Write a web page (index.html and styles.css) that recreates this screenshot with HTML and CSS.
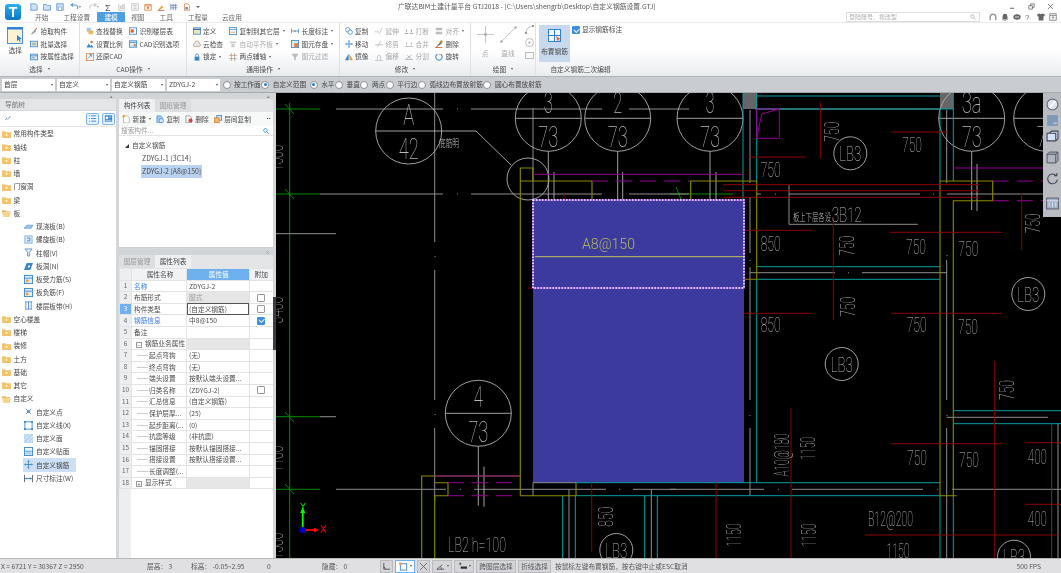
FILE: index.html
```html
<!DOCTYPE html>
<html lang="zh">
<head>
<meta charset="utf-8">
<title>GTJ2018</title>
<link rel="stylesheet" href="styles.css">
</head>
<body>
<svg class="defs" width="0" height="0">
  <symbol id="folder" viewBox="0 0 10 9"><path d="M0 1.5h3.5l1 1H10V9H0z" fill="#f2c36b"/><circle cx="5" cy="5.5" r="1.2" fill="#fff3d0"/></symbol>
  <symbol id="folderopen" viewBox="0 0 10 9"><path d="M0 1.5h3.5l1 1H9V4H0z" fill="#e9b65c"/><path d="M0 4h10L8.5 9H1.5z" fill="#f6d48c"/></symbol>
  <symbol id="grid" viewBox="0 0 10 10"><rect x=".5" y=".5" width="9" height="9" fill="#e2effb" stroke="#3a86cc"/><path d="M.5 3.5h9" stroke="#3a86cc"/><rect x="2" y="5" width="3" height="3" fill="#f0a040"/></symbol>
</svg>

<header class="top">
  <div class="logo"><span class="logo-t">T</span></div>
  <div class="top-main">
    <div class="qat">
      <svg class="q" viewBox="0 0 10 10"><path d="M1 1h6l2 2v6H1z" fill="#cfe2f6" stroke="#5a94cc"/></svg>
      <svg class="q" viewBox="0 0 10 10"><path d="M.5 2h4l1 1h4v6H.5z" fill="#cfe2f6" stroke="#5a94cc"/></svg>
      <svg class="q" viewBox="0 0 10 10"><rect x="1" y="1" width="8" height="8" fill="#cfe2f6" stroke="#5a94cc"/><rect x="3" y="5" width="4" height="4" fill="#fff" stroke="#5a94cc" stroke-width=".6"/></svg>
      <svg class="q q-wide" viewBox="0 0 14 10"><path d="M9 7.5A3 3 0 0 0 7 2.5H2M4 .5l-2.5 2 2.5 2" fill="none" stroke="#5a94cc" stroke-width="1.3"/><path d="M11 4h3l-1.5 2z" fill="#666"/></svg>
      <svg class="q q-wide" viewBox="0 0 14 10"><path d="M3 7.5A3 3 0 0 1 5 2.5h5M8 .5l2.5 2L8 4.500" fill="none" stroke="#c4c8cc" stroke-width="1.3"/><path d="M11 4h3l-1.5 2z" fill="#999"/></svg>
      <span class="q sigma">Σ</span>
      <svg class="q" viewBox="0 0 10 10"><path d="M1 9V1M1 9h8M3 7V4h2v3zM6 7V2h2v5z" fill="none" stroke="#bbb"/></svg>
      <svg class="q" viewBox="0 0 10 10"><rect x="1" y="1" width="8" height="8" fill="none" stroke="#bbb"/><path d="M3 3h4M3 5h4M3 7h4" stroke="#bbb"/></svg>
      <svg class="q" viewBox="0 0 10 10"><rect x="1" y="2" width="8" height="7" fill="#fff" stroke="#e08040"/><path d="M1 3.5h8" stroke="#e08040"/><circle cx="5" cy="6" r="1.5" fill="#e08040"/></svg>
      <svg class="q" viewBox="0 0 10 10"><path d="M1 9l5-6 2 2-5 4z" fill="#f0a040"/><path d="M1 9.500h8" stroke="#d04040"/></svg>
      <svg class="q" viewBox="0 0 10 10"><path d="M1 1v8M4 1v8M7 1v8M1 3h8M1 6h8" stroke="#5a7ab0" stroke-width=".9"/></svg>
      <svg class="q" viewBox="0 0 10 10"><path d="M2 1h4l2 2v6H2z" fill="#fff" stroke="#e08040"/><rect x="3" y="5" width="3" height="3" fill="#4a8fd0"/></svg>
      <span class="qdrop"></span>
      <span class="apptitle">广联达BIM土建计量平台 GTJ2018 - [C:\Users\shengrb\Desktop\自定义钢筋设置.GTJ]</span>
      <span class="winctl">
        <svg class="w" viewBox="0 0 8 8"><path d="M1 6h5" stroke="#555"/></svg>
        <svg class="w" viewBox="0 0 8 8"><path d="M1 3h4v4H1zM3 3V1h4v4H5" fill="none" stroke="#555" stroke-width=".8"/></svg>
        <svg class="w" viewBox="0 0 8 8"><path d="M1 1l6 6M7 1L1 7" stroke="#555" stroke-width=".8"/></svg>
      </span>
    </div>
    <div class="tabline">
      <nav class="tabs">
        <span class="tab t1">开始</span>
        <span class="tab t2">工程设置</span>
        <span class="tab active">建模</span>
        <span class="tab t3">视图</span>
        <span class="tab t4">工具</span>
        <span class="tab t5">工程量</span>
        <span class="tab t6">云应用</span>
      </nav>
      <div class="tray">
        <div class="search"><span>登陆账号、搜改型</span>
          <svg class="s-ic" viewBox="0 0 8 8"><circle cx="3.2" cy="3.2" r="2.4" fill="none" stroke="#aaa"/><path d="M5 5l2.5 2.5" stroke="#aaa"/></svg>
        </div>
        <svg class="ti ti-first" viewBox="0 0 10 10"><path d="M1.500 9V5a3.500 3.500 0 0 1 7 0v4" fill="none" stroke="#999" stroke-width="1.8"/></svg>
        <svg class="ti" viewBox="0 0 10 10"><path d="M5 1a3 3 0 0 1 3 3v3l1 1H1l1-1V4a3 3 0 0 1 3-3zM4 9h2v1H4z" fill="#666"/></svg>
        <svg class="ti" viewBox="0 0 10 10"><ellipse cx="5" cy="5" rx="4.5" ry="3.5" fill="#666"/><path d="M2.500 5h5" stroke="#fff"/></svg>
        <span class="ti help">?<i>⁃</i></span>
        <svg class="ti" viewBox="0 0 10 10"><path d="M0 2l3-1.500 2 1 2-1L10 2 9 4.500H8V9.500H2V4.500H1z" fill="#666"/></svg>
        <svg class="ti" viewBox="0 0 10 10"><rect x="1" y="1" width="8" height="8" fill="none" stroke="#777"/><path d="M1 3h8M5 8V4.500M3.500 6L5 4.500 6.500 6" fill="none" stroke="#777"/></svg>
      </div>
    </div>
  </div>
</header>

<section class="ribbon">
  <div class="group g1">
    <div class="gbody">
      <div class="bigbtn">
        <svg class="bigic" viewBox="0 0 16 17"><rect x=".5" y=".5" width="15" height="16" fill="#fbf1d5" stroke="#4a93d8"/><rect x="0" y="0" width="16" height="2.500" fill="#2f82cf"/><path d="M10 8l5 4-2.200.300 1 2.400-1 .3-1-2.300L10 14z" fill="#2f82cf"/></svg>
        <span>选择</span>
      </div>
      <div class="col">
        <div class="cmd"><svg class="ic" viewBox="0 0 10 10"><path d="M1 9l5-6 2 2-5 4z" fill="#999"/><path d="M6 3l2-2 1 1-2 2" fill="#d86a3a"/></svg>拾取构件</div>
        <div class="cmd"><svg class="ic" viewBox="0 0 10 10"><rect x=".5" y="1.500" width="9" height="7" fill="#fbeec8" stroke="#3a86cc"/><path d="M2 4h6M2 6h6" stroke="#3a86cc" stroke-width=".8"/></svg>批量选择</div>
        <div class="cmd"><svg class="ic" viewBox="0 0 10 10"><rect x=".5" y="1.500" width="9" height="7" fill="#dcebfa" stroke="#3a86cc"/><path d="M.5 3.500h9" stroke="#3a86cc"/><path d="M2 6h4" stroke="#777"/></svg>按属性选择</div>
      </div>
    </div>
    <div class="glabel">选择 <i class="dd"></i></div>
  </div>

  <div class="group g2">
    <div class="gbody">
      <div class="col c-a">
        <div class="cmd"><svg class="ic" viewBox="0 0 10 10"><path d="M1 1h5v5H1z" fill="#9cc6ec"/><path d="M3 4h6v5H3z" fill="#f2b860"/></svg>查找替换</div>
        <div class="cmd"><svg class="ic" viewBox="0 0 10 10"><path d="M.5 9.500l3-5 2 3 1.500-1.500 2.500 3.500z" fill="#3a86cc"/><circle cx="7" cy="2.500" r="1.500" fill="#e86a3a"/></svg>设置比例</div>
        <div class="cmd"><svg class="ic" viewBox="0 0 10 10"><rect x=".5" y=".5" width="9" height="9" fill="#fff" stroke="#e08040"/><path d="M2 7l5-5M7 5V2H4" fill="none" stroke="#3a86cc"/></svg>还原CAD</div>
      </div>
      <div class="col c-b">
        <div class="cmd"><svg class="ic" viewBox="0 0 10 10"><rect x=".5" y="1" width="9" height="8" fill="#fff" stroke="#3a86cc"/><rect x="2" y="3" width="4" height="4" fill="#e0602a"/></svg>识别楼层表</div>
        <div class="cmd"><svg class="ic" viewBox="0 0 10 10"><rect x=".5" y="1" width="9" height="8" fill="#dcebfa" stroke="#3a86cc"/><path d="M.5 3h9" stroke="#3a86cc"/><rect x="6" y="5" width="2.500" height="3" fill="#e08040"/></svg>CAD识别选项</div>
      </div>
    </div>
    <div class="glabel">CAD操作 <i class="dd"></i></div>
  </div>

  <div class="group g3">
    <div class="gbody">
      <div class="col c-a">
        <div class="cmd"><svg class="ic" viewBox="0 0 10 10"><rect x=".5" y="1" width="9" height="8" fill="#f3e3b8" stroke="#3a86cc"/><path d="M.5 3h9" stroke="#2f72b8" stroke-width="1.500"/></svg>定义</div>
        <div class="cmd"><svg class="ic" viewBox="0 0 10 10"><path d="M2.500 8a2 2 0 0 1-.5-4 3 3 0 0 1 6 .5 1.800 1.800 0 0 1 0 3.500z" fill="#dcebfa" stroke="#e08040" stroke-width=".8"/></svg>云检查</div>
        <div class="cmd"><svg class="ic" viewBox="0 0 10 10"><rect x="2" y="4.500" width="6" height="5" fill="#3a86cc"/><path d="M3.200 4.500V3a1.800 1.800 0 0 1 3.600 0v1.500" fill="none" stroke="#3a86cc"/></svg>锁定<i class="dd"></i></div>
      </div>
      <div class="col c-b">
        <div class="cmd"><svg class="ic" viewBox="0 0 10 10"><rect x=".5" y=".5" width="9" height="9" fill="#fff" stroke="#3a86cc"/><path d="M.5 3h9" stroke="#3a86cc"/><path d="M2 6.500h6" stroke="#e08040"/></svg>复制到其它层<i class="dd"></i></div>
        <div class="cmd off"><svg class="ic" viewBox="0 0 10 10"><path d="M1 2h8v2H1zM3 5h4v4H3z" fill="#ccc"/></svg>自动平齐板<i class="dd"></i></div>
        <div class="cmd"><svg class="ic" viewBox="0 0 10 10"><path d="M3 0v10M7 0v10M0 3h10M0 7h10" stroke="#a08060" stroke-width=".7"/></svg>两点辅轴<i class="dd"></i></div>
      </div>
      <div class="col c-c">
        <div class="cmd"><svg class="ic" viewBox="0 0 10 10"><path d="M.5 2v6M9.500 2v6M.5 5h9" stroke="#3a86cc"/><path d="M4 4h2v2H4z" fill="#e08040"/></svg>长度标注<i class="dd"></i></div>
        <div class="cmd"><svg class="ic" viewBox="0 0 10 10"><rect x=".5" y=".5" width="9" height="9" fill="#dcebfa" stroke="#3a86cc"/><rect x="4" y="4" width="5" height="5" fill="#e08040"/></svg>图元存盘<i class="dd"></i></div>
        <div class="cmd off"><svg class="ic" viewBox="0 0 10 10"><path d="M.5 1h9L6 5.500V9.500L4 8.500v-3z" fill="#bbb"/></svg>图元过滤</div>
      </div>
    </div>
    <div class="glabel">通用操作 <i class="dd"></i></div>
  </div>

  <div class="group g4">
    <div class="gbody">
      <div class="col c-a">
        <div class="cmd"><svg class="ic" viewBox="0 0 10 10"><circle cx="3.500" cy="3.500" r="2.800" fill="none" stroke="#3a86cc"/><circle cx="6.500" cy="6.500" r="2.800" fill="#fff" stroke="#3a86cc"/></svg>复制</div>
        <div class="cmd"><svg class="ic" viewBox="0 0 10 10"><path d="M5 0l1.500 2h-3zM5 10L3.500 8h3zM0 5l2-1.500v3zM10 5L8 3.500v3z" fill="#2f82cf"/><path d="M2 5h6M5 2v6" stroke="#2f82cf"/></svg>移动</div>
        <div class="cmd"><svg class="ic" viewBox="0 0 10 10"><path d="M4.500 1v8H0z" fill="#2f82cf"/><path d="M5.500 1v8H10z" fill="#f0a030"/></svg>镜像</div>
      </div>
      <div class="col c-b off">
        <div class="cmd"><svg class="ic" viewBox="0 0 10 10"><path d="M0 6h5M9 1L5 9" stroke="#bbb"/></svg>延伸</div>
        <div class="cmd"><svg class="ic" viewBox="0 0 10 10"><path d="M0 6h10M7 1L3 9" stroke="#bbb"/></svg>修剪</div>
        <div class="cmd"><svg class="ic" viewBox="0 0 10 10"><path d="M3 9V5a2 2 0 0 1 4 0v4M0 9.500h10" fill="none" stroke="#bbb"/></svg>偏移</div>
      </div>
      <div class="col c-c off">
        <div class="cmd"><svg class="ic" viewBox="0 0 10 10"><path d="M0 8h4M6 8h4M2 3v3M8 3v3" stroke="#888"/></svg>打断</div>
        <div class="cmd"><svg class="ic" viewBox="0 0 10 10"><path d="M0 8h10M2 3v3M8 3v3" stroke="#aaa"/></svg>合并</div>
        <div class="cmd"><svg class="ic" viewBox="0 0 10 10"><path d="M0 8h10M2 7l6-4M3 3l4 4" stroke="#aaa"/></svg>分割</div>
      </div>
      <div class="col c-d">
        <div class="cmd off"><svg class="ic" viewBox="0 0 10 10"><path d="M1 1h8v3H1zM1 6h8v3H1z" fill="#bbb"/></svg>对齐<i class="dd"></i></div>
        <div class="cmd"><svg class="ic" viewBox="0 0 10 10"><path d="M1 9l6-7 2 2-7 5z" fill="#777"/><path d="M0 9.500h9" stroke="#e0602a" stroke-width="1.200"/><path d="M6 2l2-2 2 2-2 2" fill="#e08030"/></svg>删除</div>
        <div class="cmd"><svg class="ic" viewBox="0 0 10 10"><path d="M7 1.500A4 4 0 1 1 3 1.500" fill="none" stroke="#3a86cc" stroke-width="1.300"/><path d="M5 .5l2.500 1-2 1.500z" fill="#f0a030"/></svg>旋转</div>
      </div>
    </div>
    <div class="glabel">修改 <i class="dd"></i></div>
  </div>

  <div class="group g5">
    <div class="gbody">
      <div class="bigoff b-pt">
        <svg class="drawic" viewBox="0 0 18 18"><path d="M0 9h18M9 0v18" stroke="#c4c4c4"/><circle cx="9" cy="9" r="1.500" fill="#aaa"/></svg>
        <span>点</span>
      </div>
      <div class="bigoff b-ln">
        <svg class="drawic" viewBox="0 0 18 18"><path d="M1 17L17 1" stroke="#c4c4c4"/><circle cx="1.500" cy="16.500" r="1.300" fill="#aaa"/><circle cx="16.500" cy="1.500" r="1.300" fill="#aaa"/></svg>
        <span>直线</span>
      </div>
      <div class="col c-draw">
        <svg class="dic" viewBox="0 0 9 9"><path d="M1 8A7 7 0 0 1 8 1" fill="none" stroke="#bbb"/><rect y="7" width="2" height="2" fill="#999"/><rect x="7" width="2" height="2" fill="#999"/></svg>
        <svg class="dic" viewBox="0 0 9 9"><circle cx="4.500" cy="4.500" r="4" fill="none" stroke="#bbb"/><circle cx="4.500" cy="4.500" r="1" fill="#999"/></svg>
        <svg class="dic" viewBox="0 0 9 9"><rect x=".5" y="1.500" width="8" height="6" fill="none" stroke="#bbb"/></svg>
      </div>
    </div>
    <div class="glabel">绘图 <i class="dd"></i></div>
  </div>

  <div class="group g6">
    <div class="gbody">
      <div class="bigsel">
        <svg class="selic" viewBox="0 0 14 14"><rect x=".5" y=".5" width="12" height="12" fill="#f4f8fc" stroke="#2f82cf"/><path d="M.5 6.500h12M6.500.5v12" stroke="#2f82cf"/><path d="M8 7l5 3-2 .5 1 2.500-2-2-1 1z" fill="#e8753a"/></svg>
        <span>布置钢筋</span>
      </div>
      <label class="rchk"><span class="cb on"></span>显示钢筋标注</label>
    </div>
    <div class="glabel">自定义钢筋二次编辑</div>
  </div>
</section>

<section class="opts">
  <div class="sel">首层<i class="dd"></i></div>
  <div class="sel">自定义<i class="dd"></i></div>
  <div class="sel">自定义钢筋<i class="dd"></i></div>
  <div class="sel">ZDYGJ-2<i class="dd"></i></div>
  <div class="radios">
    <span class="rad"><i class="dot"></i>按工作面</span>
    <span class="rad"><i class="dot on"></i>自定义范围</span>
    <span class="rad r-gap"><i class="dot on"></i>水平</span>
    <span class="rad"><i class="dot"></i>垂直</span>
    <span class="rad"><i class="dot"></i>两点</span>
    <span class="rad"><i class="dot"></i>平行边</span>
    <span class="rad"><i class="dot"></i>弧线边布置放射筋</span>
    <span class="rad"><i class="dot"></i>圆心布置放射筋</span>
  </div>
</section>

<main class="main">
  <aside class="nav">
    <div class="paneltop"><i class="pin">▴</i></div>
    <div class="phead">导航树</div>
    <div class="navtools">
      <svg class="navstar" viewBox="0 0 10 8"><path d="M1 6l2-2 2 1 3-4" stroke="#2f72c8" stroke-width="1.200" fill="none" stroke-dasharray="1.500 .8"/></svg>
      <span class="navbtn"><svg viewBox="0 0 10 10"><path d="M1 2h1M1 5h1M1 8h1M3.500 2H9M3.500 5H9M3.500 8H9" stroke="#3a86cc"/></svg></span>
      <span class="navbtn"><svg viewBox="0 0 10 10"><rect x="1" y="1.500" width="8" height="7" fill="#3a86cc"/><rect x="2" y="3" width="2.500" height="2.500" fill="#fff"/><path d="M5.500 3.500H8M2 7h6" stroke="#fff" stroke-width=".7"/></svg></span>
    </div>
    <ul class="tree">
      <li><svg class="fold"><use href="#folder"/></svg>常用构件类型</li>
      <li><svg class="fold"><use href="#folder"/></svg>轴线</li>
      <li><svg class="fold"><use href="#folder"/></svg>柱</li>
      <li><svg class="fold"><use href="#folder"/></svg>墙</li>
      <li><svg class="fold"><use href="#folder"/></svg>门窗洞</li>
      <li><svg class="fold"><use href="#folder"/></svg>梁</li>
      <li><svg class="fold"><use href="#folderopen"/></svg>板</li>
      <li class="sub"><svg class="leaf" viewBox="0 0 10 10"><path d="M0 7l3-3.500h7L8 7z" fill="#9cc6ec" stroke="#3a86cc" stroke-width=".6"/></svg>现浇板(B)</li>
      <li class="sub"><svg class="leaf" viewBox="0 0 10 10"><rect x="1" y="1" width="8" height="8" fill="#dcebfa" stroke="#7ab0e0"/><path d="M3.500 3.500h3v3h-3" fill="none" stroke="#3a86cc"/></svg>螺旋板(B)</li>
      <li class="sub"><svg class="leaf" viewBox="0 0 10 10"><path d="M1 1h8L6 5v4H4V5z" fill="#dcebfa" stroke="#3a86cc" stroke-width=".8"/></svg>柱帽(V)</li>
      <li class="sub"><svg class="leaf" viewBox="0 0 10 10"><path d="M0 9l3-8h7L7 9z" fill="#3a86cc"/><path d="M4 6l1-2h2L6 6z" fill="#fff"/></svg>板洞(N)</li>
      <li class="sub"><svg class="leaf" viewBox="0 0 10 10"><use href="#grid"/></svg>板受力筋(S)</li>
      <li class="sub"><svg class="leaf" viewBox="0 0 10 10"><use href="#grid"/></svg>板负筋(F)</li>
      <li class="sub"><svg class="leaf" viewBox="0 0 10 10"><path d="M2 1v8M5 1v8M8 1v8M1 1h8M1 9h8" stroke="#3a86cc" stroke-width=".9"/></svg>楼层板带(H)</li>
      <li><svg class="fold"><use href="#folder"/></svg>空心楼盖</li>
      <li><svg class="fold"><use href="#folder"/></svg>楼梯</li>
      <li><svg class="fold"><use href="#folder"/></svg>装修</li>
      <li><svg class="fold"><use href="#folder"/></svg>土方</li>
      <li><svg class="fold"><use href="#folder"/></svg>基础</li>
      <li><svg class="fold"><use href="#folder"/></svg>其它</li>
      <li><svg class="fold"><use href="#folderopen"/></svg>自定义</li>
      <li class="sub"><svg class="leaf" viewBox="0 0 10 10"><path d="M2 2l6 6M8 2L2 8" stroke="#5a9ada"/><circle cx="5" cy="5" r="1.500" fill="#3a86cc"/></svg>自定义点</li>
      <li class="sub"><svg class="leaf" viewBox="0 0 10 10"><rect x="1" y="1" width="8" height="8" fill="none" stroke="#3a86cc"/><rect width="2" height="2" fill="#3a86cc"/><rect x="8" width="2" height="2" fill="#3a86cc"/><rect y="8" width="2" height="2" fill="#3a86cc"/><rect x="8" y="8" width="2" height="2" fill="#3a86cc"/></svg>自定义线(X)</li>
      <li class="sub"><svg class="leaf" viewBox="0 0 10 10"><rect width="10" height="10" fill="#b8d4f0"/><path d="M0 3l3-3M0 7l7-7M2 10l8-8M6 10l4-4" stroke="#fff" stroke-width=".7"/></svg>自定义面</li>
      <li class="sub"><svg class="leaf" viewBox="0 0 10 10"><rect x=".5" y=".5" width="9" height="9" fill="#f4f8fc" stroke="#3a86cc"/><rect x="1.500" y="4" width="7" height="2" fill="#7ab0e0"/><path d="M1.500 7.500h7" stroke="#7ab0e0"/></svg>自定义贴面</li>
      <li class="sub cur"><svg class="leaf" viewBox="0 0 10 10"><path d="M5 0l1.500 2h-3zM5 10L3.500 8h3zM0 5l2-1.500v3zM10 5L8 3.500v3z" fill="#3a86cc"/><path d="M5 2v6M2 5h6" stroke="#3a86cc"/></svg>自定义钢筋</li>
      <li class="sub"><svg class="leaf" viewBox="0 0 10 10"><path d="M.5 1v8M9.500 1v8" stroke="#555"/><path d="M1 5h8" stroke="#3a86cc"/><path d="M1 5l2-1.500v3zM9 5L7 3.500v3z" fill="#3a86cc"/></svg>尺寸标注(W)</li>
    </ul>
  </aside>

  <section class="mid">
    <div class="parts">
      <div class="paneltop"><i class="pin">▴</i></div>
      <div class="ptabs"><span class="ptab on">构件列表</span><span class="ptab">图纸管理</span></div>
      <div class="ptools">
        <span class="pt"><svg class="ic" viewBox="0 0 10 10"><path d="M2 1h5l2 2v7H2z" fill="#fff" stroke="#999" stroke-width=".8"/><circle cx="2" cy="1.500" r="1.500" fill="#f0a030"/></svg>新建<i class="dd"></i></span>
        <span class="pt"><svg class="ic" viewBox="0 0 10 10"><path d="M1 1h5l2 2v6.500H1z" fill="#9cc6ec" stroke="#3a86cc" stroke-width=".7"/><rect x="4" y="5" width="5" height="4" fill="#dcebfa" stroke="#3a86cc" stroke-width=".7"/></svg>复制</span>
        <span class="pt"><svg class="ic" viewBox="0 0 10 10"><path d="M1 1h5l2 2v6.500H1z" fill="#eee" stroke="#777" stroke-width=".7"/><circle cx="7" cy="7" r="2.500" fill="#d84040"/></svg>删除</span>
        <span class="pt"><svg class="ic" viewBox="0 0 10 10"><rect x="3.500" y=".5" width="6" height="6" fill="#dcebfa" stroke="#3a86cc"/><rect x=".5" y="3.500" width="6" height="6" fill="#f2b860" stroke="#e08030"/></svg>层间复制</span>
        <span class="pmore">⠒</span>
      </div>
      <div class="psearch"><span>搜索构件...</span><svg class="s-ic" viewBox="0 0 8 8"><circle cx="3.200" cy="3.200" r="2.400" fill="none" stroke="#2f82cf"/><path d="M5 5l2.500 2.500" stroke="#2f82cf" stroke-width="1.300"/></svg></div>
      <div class="plist">
        <div class="pnode"><i class="tri"></i>自定义钢筋</div>
        <div class="pitem">ZDYGJ-1 [3C14]</div>
        <div class="pitem chosen">ZDYGJ-2 [A8@150]</div>
      </div>
    </div>
    <div class="props">
      <div class="paneltop"><i class="pin x">×</i></div>
      <div class="ptabs"><span class="ptab">图层管理</span><span class="ptab on">属性列表</span></div>
      <table class="ptable">
        <thead><tr><th class="n"></th><th class="nm">属性名称</th><th class="val">属性值</th><th class="add">附加</th></tr></thead>
        <tbody>
          <tr><td class="n">1</td><td class="blue">名称</td><td>ZDYGJ-2</td><td class="add"></td></tr>
          <tr><td class="n">2</td><td>布筋形式</td><td class="graycell">图式</td><td class="add"><span class="cb"></span></td></tr>
          <tr><td class="n cur">3</td><td>构件类型</td><td class="focus">(自定义钢筋)</td><td class="add"><span class="cb"></span></td></tr>
          <tr><td class="n">4</td><td class="blue">钢筋信息</td><td>中8@150</td><td class="add"><span class="cb on"></span></td></tr>
          <tr><td class="n">5</td><td>备注</td><td></td><td class="add"></td></tr>
          <tr><td class="n">6</td><td><span class="ex">−</span>钢筋业务属性</td><td class="graycell"></td><td class="add"></td></tr>
          <tr><td class="n">7</td><td class="ind">起点弯钩</td><td>(无)</td><td class="add"></td></tr>
          <tr><td class="n">8</td><td class="ind">终点弯钩</td><td>(无)</td><td class="add"></td></tr>
          <tr><td class="n">9</td><td class="ind">端头设置</td><td>按默认端头设置...</td><td class="add"></td></tr>
          <tr><td class="n">10</td><td class="ind">归类名称</td><td>(ZDYGJ-2)</td><td class="add"><span class="cb"></span></td></tr>
          <tr><td class="n">11</td><td class="ind">汇总信息</td><td>(自定义钢筋)</td><td class="add"></td></tr>
          <tr><td class="n">12</td><td class="ind">保护层厚...</td><td>(25)</td><td class="add"></td></tr>
          <tr><td class="n">13</td><td class="ind">起步距离(...</td><td>(0)</td><td class="add"></td></tr>
          <tr><td class="n">14</td><td class="ind">抗震等级</td><td>(非抗震)</td><td class="add"></td></tr>
          <tr><td class="n">15</td><td class="ind">锚固搭接</td><td>按默认锚固搭接...</td><td class="add"></td></tr>
          <tr><td class="n">16</td><td class="ind">搭接设置</td><td>按默认搭接设置...</td><td class="add"></td></tr>
          <tr><td class="n">17</td><td class="ind">长度调整(...</td><td></td><td class="add"></td></tr>
          <tr><td class="n">18</td><td><span class="ex">+</span>显示样式</td><td class="graycell"></td><td class="add"></td></tr>
        </tbody>
      </table>
      <div class="pfill"></div>
    </div>
  </section>

  <div class="split"><i></i></div>

  <section class="canvas">
    <svg class="cad" viewBox="276 93 785 465" width="785" height="465">
      <rect x="533" y="200" width="211" height="282.7" fill="#3d3a9e"/>
      <g class="gr">
        <path d="M289.7 103V558M276 109H320M276 194H320M276 416.7H320M276 489.3H320M670 194H733"/>
        <path d="M285 104l9 10M285 189l9 10M285 412l9 10M285 484l9 10M676 187l5 12"/>
      </g>
      <g class="gy">
        <path d="M336 109H443M471 109H602M629 109H689M336 194H443M471 194H602M629 194H689M276 233.7H336M320 194H336M320 416.7H336"/>
        <path d="M434.7 93V242M434.7 270V400M434.7 428V500M533 108V200"/>
        <path d="M757 194H761M789 194H920M947 194H1061M750 272.7H835M862 272.7H947"/>
        <path d="M750 110V183M750 197V253M750 267V400M750 428V496M946.7 110V183M946.7 260V400M946.7 428V558"/>
        <path d="M336 489.3H446M474 489.3H606M633 489.3H676M670 489.3H764M792 489.3H923M952 489.3H1061M946.7 417.3H1048"/>
        <path d="M533 482.7H576M533 482.7V496M569 489.3V558M651.3 489.3V558M1058 423.700V558"/>
        <path d="M755 109H940"/>
        <path d="M789 185.3V224.3H917.7"/>
      </g>
      <g class="gdot">
        <path d="M457 109h1M457 194h1M435 256v1M435 414v1M460 489.3h1M619 489.3h1M778 489.3h1M937 489.3h1M775 194h1M933 194h1M848 272.7h1M750 260v1M947 255v1M947 415v1M750 415v1"/>
      </g>
      <path d="M743 93h14v16h-14zM940 93h13v16h-13z" fill="#666"/>
      <g class="ci">
        <circle cx="408.7" cy="131" r="33"/><circle cx="528" cy="179" r="21"/>
        <circle cx="548.3" cy="118.3" r="33"/><circle cx="617.7" cy="118.3" r="33"/>
        <circle cx="710" cy="118.3" r="33"/><circle cx="971.7" cy="118.3" r="33"/><circle cx="1046.7" cy="118.3" r="33"/>
        <circle cx="478.3" cy="413.3" r="33"/>
        <circle cx="850.3" cy="153.3" r="16.500"/><circle cx="1028.3" cy="294" r="16.500"/>
        <circle cx="841.7" cy="364" r="16.500"/><circle cx="616.3" cy="550" r="16.500"/><circle cx="1014" cy="556.7" r="16.500"/>
        <path d="M375.7 131H476L511 165M515.3 118.3H581.3M584.7 118.3H650.7M677 118.3H743M938.7 118.3H1004.7M1013.7 118.3H1061M445.3 413.3H511.3"/>
        <path d="M548.3 151.3V200M554 172V200M617.7 151.3V200M622.7 172V200M710 151.3V200M716 172V200M971.7 151.3V210M977 164V211M478.3 446.3V505.7M484 466.7V506.7"/>
      </g>
      <g class="cy">
        <path d="M756.7 96H940M756.7 109H953M743 93V200M756.7 93V181M756.7 279.3V482.7M940 109V181M953.3 93V181M756.7 266.7H940M756.7 279.3H940M953 410.7H1061M953 423.7H1061"/>
        <path d="M576 482.7H940M576 495.7H940M562.7 495.7V558M575.3 495.7V558M644.7 495.7V558M657.3 495.7V558M940 495.7V558M953.3 495.7V558"/>
      </g>
      <path class="cyd" d="M1051.7 423.7V558"/>
      <g class="ye">
        <path d="M520.3 495.7V168H533V181H592V200M520.3 181H533M520.3 495.7H576V482.7"/>
        <path d="M690.7 200V181H756.7V279.3H744"/>
        <path d="M953.3 495.7V200.7H992.7V181H940V495.7H956.7"/>
        <path d="M520.3 476H421.7V558M434.7 482.7H448V495.7H434.7V558"/>
      </g>
      <g class="pu">
        <path d="M533 174.3H743M953.3 168H1044M434.7 476H520.3"/>
        <path d="M756.7 109H779.3V138.3H756.7zM756.7 138.3L761.7 114L779.3 109"/>
      </g>
      <g class="pud">
        <path d="M592 181H690M992.7 181H1045M992.7 200.7H1045M448 482.7H520.3M448 495.7H520.3"/>
      </g>
      <g class="re">
        <path d="M564 194V200M528 288H533M820.3 101.7V158.3M891 132H946.7M750 157H805.7M723 184.7H979M723 190.7H979M723 197.3H979"/>
        <path d="M833.3 216.7V320M744 230.3H812M890 232.3H1001.7M1021.7 193V250M744 313.3H812M891 313.3H1002"/>
        <path d="M591.7 482.7V551.7M791 407.7V558M891 443.7H1002.3M994.3 360.7V558M1025.7 442.7H1061M1025.7 504.3H1061M865 535H1058M716 482.7V558"/>
      </g>
      <rect class="selbox2" x="533" y="200" width="211" height="88"/>
      <rect class="selbox" x="533" y="200" width="211" height="88"/>
      <path class="rebar" d="M535 256.7H743"/>
      <text class="rbt" x="582" y="249" textLength="53" lengthAdjust="spacingAndGlyphs">A8@150</text>
      <g class="tx">
        <text x="408.7" y="125" textLength="11" lengthAdjust="spacingAndGlyphs">A</text>
        <text x="408.7" y="159" textLength="20" lengthAdjust="spacingAndGlyphs">42</text>
        <text x="548.3" y="113" textLength="9" lengthAdjust="spacingAndGlyphs">3</text>
        <text x="548.3" y="146.7" textLength="20" lengthAdjust="spacingAndGlyphs">73</text>
        <text x="617.7" y="113" textLength="9" lengthAdjust="spacingAndGlyphs">2</text>
        <text x="617.7" y="146.7" textLength="20" lengthAdjust="spacingAndGlyphs">73</text>
        <text x="710" y="113" textLength="9" lengthAdjust="spacingAndGlyphs">3</text>
        <text x="710" y="146.7" textLength="20" lengthAdjust="spacingAndGlyphs">73</text>
        <text x="971.7" y="113" textLength="20" lengthAdjust="spacingAndGlyphs">3a</text>
        <text x="971.7" y="146.7" textLength="20" lengthAdjust="spacingAndGlyphs">73</text>
        <text x="1046.7" y="146.7" textLength="20" lengthAdjust="spacingAndGlyphs">73</text>
        <text x="478.3" y="407.3" textLength="9" lengthAdjust="spacingAndGlyphs">4</text>
        <text x="478.3" y="441.7" textLength="20" lengthAdjust="spacingAndGlyphs">73</text>
      </g>
      <g class="tm">
        <text x="912" y="151.5" textLength="20" lengthAdjust="spacingAndGlyphs">750</text>
        <text x="770.7" y="176.5" textLength="20" lengthAdjust="spacingAndGlyphs">750</text>
        <text x="770.7" y="250.5" textLength="20" lengthAdjust="spacingAndGlyphs">850</text>
        <text x="916" y="254" textLength="20" lengthAdjust="spacingAndGlyphs">750</text>
        <text x="968.3" y="256" textLength="20" lengthAdjust="spacingAndGlyphs">750</text>
        <text x="770.7" y="332" textLength="20" lengthAdjust="spacingAndGlyphs">850</text>
        <text x="916.7" y="332" textLength="20" lengthAdjust="spacingAndGlyphs">750</text>
        <text x="968" y="334" textLength="20" lengthAdjust="spacingAndGlyphs">750</text>
        <text x="917" y="465" textLength="20" lengthAdjust="spacingAndGlyphs">750</text>
        <text x="969" y="467" textLength="20" lengthAdjust="spacingAndGlyphs">750</text>
        <text x="1037.3" y="464" textLength="19" lengthAdjust="spacingAndGlyphs">400</text>
        <text x="1037.3" y="526" textLength="19" lengthAdjust="spacingAndGlyphs">400</text>
        <text x="898" y="558" textLength="23" lengthAdjust="spacingAndGlyphs">1150</text>
        <text x="890.5" y="526" textLength="45" lengthAdjust="spacingAndGlyphs">B12@200</text>
        <text x="477" y="552" textLength="58" lengthAdjust="spacingAndGlyphs">LB2 h=100</text>
        <text x="850.3" y="160.5" textLength="22" lengthAdjust="spacingAndGlyphs">LB3</text>
        <text x="1028.3" y="301.5" textLength="22" lengthAdjust="spacingAndGlyphs">LB3</text>
        <text x="841.7" y="371.5" textLength="22" lengthAdjust="spacingAndGlyphs">LB3</text>
        <text x="616.3" y="557.5" textLength="22" lengthAdjust="spacingAndGlyphs">LB3</text>
        <text x="1014" y="564" textLength="22" lengthAdjust="spacingAndGlyphs">LB3</text>
        <text x="846.7" y="222" textLength="30" lengthAdjust="spacingAndGlyphs">3B12</text>
        <text transform="rotate(-90 839.5 131.7)" x="839.5" y="131.7" textLength="20" lengthAdjust="spacingAndGlyphs">750</text>
        <text transform="rotate(-90 854.5 245.7)" x="854.5" y="245.7" textLength="20" lengthAdjust="spacingAndGlyphs">750</text>
        <text transform="rotate(-90 1040.5 223.3)" x="1040.5" y="223.3" textLength="20" lengthAdjust="spacingAndGlyphs">750</text>
        <text transform="rotate(-90 855.5 306.7)" x="855.5" y="306.7" textLength="20" lengthAdjust="spacingAndGlyphs">750</text>
        <text transform="rotate(-90 1013.5 390)" x="1013.5" y="390" textLength="20" lengthAdjust="spacingAndGlyphs">750</text>
        <text transform="rotate(-90 815.5 448.3)" x="815.5" y="448.3" textLength="23" lengthAdjust="spacingAndGlyphs">1150</text>
        <text transform="rotate(-90 740.5 535)" x="740.5" y="535" textLength="23" lengthAdjust="spacingAndGlyphs">1150</text>
        <text transform="rotate(-90 815.5 535)" x="815.5" y="535" textLength="23" lengthAdjust="spacingAndGlyphs">1150</text>
        <text transform="rotate(-90 789 455)" x="789" y="455" textLength="43" lengthAdjust="spacingAndGlyphs">A10@180</text>
        <text transform="rotate(-90 613 516.7)" x="613" y="516.7" textLength="20" lengthAdjust="spacingAndGlyphs">850</text>
        <text transform="rotate(-90 283 158)" x="283" y="158" textLength="27" lengthAdjust="spacingAndGlyphs">1500</text>
        <text transform="rotate(-90 283 310)" x="283" y="310" textLength="27" lengthAdjust="spacingAndGlyphs">3400</text>
        <text transform="rotate(-90 283 459)" x="283" y="459" textLength="27" lengthAdjust="spacingAndGlyphs">1100</text>
        <text transform="rotate(-90 283 546)" x="283" y="546" textLength="27" lengthAdjust="spacingAndGlyphs">1500</text>
      </g>
      <text class="cjk" x="439" y="147" textLength="20" lengthAdjust="spacingAndGlyphs">底筋明</text>
      <text class="cjk" x="793" y="221" textLength="38" lengthAdjust="spacingAndGlyphs">板上下层各设</text>
      <path d="M319 530l-5-2.500v5z" fill="#f00"/>
      <path d="M302.7 507l-2.500 6h5z" fill="#0f0"/>
      <path d="M302.7 530V512" stroke="#0f0" stroke-width="1.8"/>
      <path d="M302.7 530H315" stroke="#f00" stroke-width="1.8"/>
      <circle cx="302.7" cy="530" r="3" fill="#00c"/>
      <text class="ux" x="320" y="533">X</text>
      <text class="uy" x="300" y="509">Y</text>
    </svg>
    <div class="sidetools">
      <svg class="st" viewBox="0 0 12 12"><circle cx="6" cy="6" r="5" fill="#dde3ea" stroke="#667"/><path d="M3 9l6-6" stroke="#fff" stroke-width="1.500"/></svg>
      <svg class="st" viewBox="0 0 12 12"><rect x="1" y="1" width="10" height="10" fill="#7f9ab8"/><path d="M7 8.500h3" stroke="#dde"/></svg>
      <svg class="st" viewBox="0 0 12 12"><path d="M3 3l2-2h6v7l-2 2H1V3z" fill="#cfe2f6" stroke="#445"/><path d="M3 3h6v7" fill="none" stroke="#445"/></svg>
      <svg class="st st-b" viewBox="0 0 12 12"><path d="M1 3h8v8H1zM1 3l2-2h8v8l-2 2M9 3l2-2" fill="#aeb6bf" stroke="#445" stroke-width=".8"/></svg>
      <svg class="st st-b" viewBox="0 0 12 12"><path d="M9.500 3.500A4.500 4.500 0 1 0 10.500 7" fill="none" stroke="#445"/><path d="M7.500 3.500H10V1" fill="none" stroke="#445"/></svg>
      <svg class="st st-c" viewBox="0 0 12 12"><rect x=".5" y="1" width="11" height="10" fill="#9fb3c8" stroke="#667"/><path d="M.5 3.500h11M3 5v4M6 5v4M9 5v4" stroke="#eef" stroke-width=".7"/></svg>
    </div>
  </section>
</main>

<footer class="status">
  <span class="coords">X = 6721 Y = 30367 Z = 2950</span>
  <span class="s-h">层高： 3</span>
  <span class="s-b">标高： -0.05~2.95</span>
  <span class="s-z">0</span>
  <span class="s-y">隐藏： 0</span>
  <span class="sb b-l"><svg viewBox="0 0 10 10"><path d="M2 1v7h7M2 5l2 3" fill="none" stroke="#555"/></svg></span>
  <span class="sb b-r"><svg viewBox="0 0 10 10"><rect x="1.500" y="2" width="7" height="7" fill="#fff" stroke="#3a86cc"/><rect x="0" y=".5" width="3" height="3" fill="#f0a060"/></svg><i class="dd"></i></span>
  <span class="sb b-x"><svg viewBox="0 0 10 10"><path d="M1 1l8 8M9 1L1 9" stroke="#666"/></svg></span>
  <span class="sb b-a"><svg viewBox="0 0 10 10"><path d="M1 8h8M1 8l6-5M6 8a4 4 0 0 0-1-3" fill="none" stroke="#555"/></svg><i class="dd"></i></span>
  <span class="sb b-o"><svg viewBox="0 0 10 10"><path d="M1 2h3M2.500 .5v3" stroke="#555"/><rect x="3" y="5" width="7" height="2.500" fill="#333"/></svg><i class="dd"></i></span>
  <span class="sb b-t">跨图层选择</span>
  <span class="sb b-t2">折线选择</span>
  <span class="s-msg">按鼠标左键布置钢筋，按右键中止或ESC取消</span>
  <span class="s-fps">500 FPS</span>
</footer>
</body>
</html>
```

FILE: styles.css
```css
* { box-sizing: border-box; }
html, body { margin: 0; padding: 0; }
body {
  width: 1061px; height: 573px; overflow: hidden;
  display: flex; flex-direction: column;
  background: #e4e6e9;
  font-family: "Noto Sans CJK SC", "Liberation Sans", sans-serif;
  font-size: 6.7px; line-height: 1; color: #4a4a4a;
  filter: blur(.35px);
}
.defs { position: absolute; }
i { font-style: normal; }

/* title area */
.top { display: flex; height: 23px; background: #fff; border-bottom: 1px solid #e8eaec; flex: none; }
.logo { width: 30px; padding: 4px 0 0 5px; flex: none; }
.logo-t {
  display: flex; width: 16px; height: 16px; align-items: center; justify-content: center;
  border-radius: 3px; background: linear-gradient(#2ab0ee, #0a78c8);
  color: #fff; font: bold 14px "Liberation Sans", sans-serif;
}
.top-main { flex: 1; display: flex; flex-direction: column; min-width: 0; }
.qat { height: 12px; display: flex; align-items: center; padding-top: 1px; }
.q { width: 8px; height: 8px; margin-right: 5px; flex: none; }
.q-wide { width: 13px; margin-right: 5px; }
.sigma { font: 9px "Liberation Sans", sans-serif; color: #555; }
.qdrop { width: 0; height: 0; border: 2px solid transparent; border-top-color: #666; margin-top: 2px; }
.apptitle { position: absolute; left: 398px; top: 3px; font-size: 6.8px; color: #555; white-space: nowrap; }
.winctl { margin-left: auto; display: flex; gap: 12px; padding-right: 7px; }
.w { width: 7px; height: 7px; }
.tabline { flex: 1; display: flex; justify-content: space-between; }
.tabs { display: flex; align-items: stretch; padding-left: 5px; }
.tab { display: flex; align-items: center; color: #666; }
.t1 { margin-right: 15px; }
.t2 { margin-right: 7px; }
.t3 { margin: 0 15px 0 6px; }
.t4 { margin-right: 15px; }
.t5 { margin-right: 14px; }
.active { width: 28px; justify-content: center; background: #4f9fe0; color: #fff; }
.tray { display: flex; align-items: center; padding-right: 4px; gap: 4px; }
.search {
  width: 134px; height: 10px; border: 1px solid #ddd; display: flex; align-items: center;
  justify-content: space-between; padding: 0 3px 0 2px; color: #b0b0b0; font-size: 6px; margin-right: 3px;
}
.s-ic { width: 6px; height: 6px; }
.ti { width: 8px; height: 8px; flex: none; }
.ti-first { margin-left: 2px; }
.help { font: 8px "Liberation Sans", sans-serif; color: #666; }
.help i { font-size: 5px; }

/* ribbon */
.ribbon { display: flex; height: 53px; flex: none; background: linear-gradient(#fff 50%, #e9ecee); }
.group { display: flex; flex-direction: column; border-right: 1px solid #dfe2e5; flex: none; }
.g1 { width: 80px; }
.g2 { width: 107px; }
.g3 { width: 153px; }
.g4 { width: 131px; }
.g5 { width: 65px; }
.g6 { width: 89px; border-right: 0; }
.gbody { flex: 1; display: flex; min-height: 0; }
.glabel { height: 13px; padding-bottom: 1px; display: flex; align-items: center; justify-content: center; gap: 2px; white-space: nowrap; }
.dd { display: inline-block; width: 0; height: 0; border: 1.5px solid transparent; border-top-color: #555; border-bottom-width: 0; border-top-width: 2px; margin-left: 3px; }
.col { display: flex; flex-direction: column; padding-top: 2px; flex: none; }
.cmd { height: 12.7px; display: flex; align-items: center; white-space: nowrap; }
.ic { width: 8px; height: 8px; margin-right: 2.5px; flex: none; }
.off, .off .cmd { color: #a8a8a8; }
.bigbtn { width: 30px; padding: 4px 0 0 7px; display: flex; flex-direction: column; align-items: flex-start; gap: 3px; flex: none; }
.bigbtn span { margin-left: 1.5px; }
.bigic { width: 16px; height: 17px; }
.g2 .c-a { margin-left: 5.5px; width: 43.5px; }
.g3 .c-a { margin-left: 5.5px; width: 36.5px; }
.g3 .c-b { width: 62px; }
.g4 .c-a { margin-left: 4.5px; width: 30.5px; }
.g4 .c-b { width: 30px; }
.g4 .c-c { width: 30px; }
.b-pt, .b-ln { display: flex; flex-direction: column; align-items: center; gap: 7px; padding-top: 3px; color: #a8a8a8; flex: none; }
.b-pt { width: 18px; margin-left: 5px; }
.b-ln { width: 18px; margin-left: 5px; }
.drawic { width: 17px; height: 17px; }
.c-draw { margin-left: 8px; gap: 4px; padding-top: 2px; }
.dic { width: 9px; height: 9px; }
.bigsel { width: 31px; height: 37px; margin: 2px 0 0 3px; background: #c8d9ed; display: flex; flex-direction: column; align-items: center; gap: 5px; padding-top: 4px; flex: none; white-space: nowrap; }
.selic { width: 14px; height: 14px; }
.rchk { display: flex; align-items: flex-start; height: 12px; margin: 3px 0 0 2px; gap: 2px; white-space: nowrap; }
.cb { display: inline-block; width: 8px; height: 8px; border: 1px solid #999; border-radius: 1px; background: #fff; position: relative; flex: none; }
.cb.on { background: #3a8fe0; border-color: #3a8fe0; }
.cb.on::after { content: ""; position: absolute; left: 1px; top: .5px; width: 4px; height: 2.5px; border: solid #fff; border-width: 0 0 1px 1px; transform: rotate(-45deg); }

/* option bar */
.opts { height: 17px; flex: none; display: flex; align-items: center; gap: 2px; padding-left: 2px; background: #c9cdd1; border-top: 1px solid #b0b3b7; border-bottom: 1px solid #a8abae; }
.sel { width: 53px; height: 12px; background: #fff; display: flex; align-items: center; justify-content: space-between; padding: 0 2px; flex: none; white-space: nowrap; color: #444; }
.radios { display: flex; align-items: center; padding-left: .5px; }
.rad { display: flex; align-items: center; white-space: nowrap; gap: 3.5px; margin-right: .5px; color: #444; }
.r-gap { margin-left: 3px; }
.dot { width: 8px; height: 8px; border-radius: 50%; background: #fff; border: 1px solid #8a8f94; position: relative; flex: none; }
.dot.on::after { content: ""; position: absolute; left: 1.5px; top: 1.5px; width: 3px; height: 3px; border-radius: 50%; background: #2a78d0; }

/* main */
.main { flex: 1; display: flex; min-height: 0; background: #d4d7da; }
.nav { width: 116px; flex: none; display: flex; flex-direction: column; background: #fff; }
.paneltop { height: 6px; background: #d2d5d8; display: flex; justify-content: flex-end; padding-right: 3px; flex: none; position: relative; overflow: hidden; }
.pin { font-size: 5px; color: #888; line-height: 6px; }
.phead { height: 12px; background: #e3e5e7; color: #777; display: flex; align-items: center; padding-left: 5px; flex: none; border-bottom: 1px solid #d8d8d8; }
.navtools { height: 16px; display: flex; align-items: center; padding-right: 1px; gap: 3px; flex: none; border-bottom: 1px solid #e8e8e8; }
.navstar { width: 8px; height: 7px; margin: 0 auto 0 4px; }
.navbtn { width: 13px; height: 12px; border: 1px solid #7ab6ea; background: #e8f2fc; border-radius: 2px; display: flex; align-items: center; justify-content: center; }
.navbtn svg { width: 9px; height: 9px; }
.tree { list-style: none; margin: 0; padding: 0; flex: 1; }
.tree li { height: 13.25px; display: flex; align-items: center; padding-left: 2px; white-space: nowrap; color: #444; }
.fold { width: 9px; height: 8px; margin-right: 2.5px; flex: none; }
.tree .sub { padding-left: 24px; }
.leaf { width: 9px; height: 9px; margin-right: 3px; flex: none; }
.tree .cur { background: linear-gradient(#cddff4, #cddff4) no-repeat 23px 0 / 53px 100%; }

.mid { width: 154px; margin-left: 3px; flex: none; display: flex; flex-direction: column; }
.parts { height: 155px; flex: none; display: flex; flex-direction: column; background: #fff; }
.ptabs { height: 13px; display: flex; background: #e3e5e7; flex: none; }
.ptab { padding: 0 2.5px; width: 36px; display: flex; align-items: center; justify-content: center; color: #9a9a9a; background: #dcdee0; white-space: nowrap; }
.ptab.on { background: #eff0f1; color: #444; }
.ptools { height: 14px; display: flex; align-items: center; padding-left: 3px; gap: 5px; background: #f7f8f8; flex: none; }
.pt { display: flex; align-items: center; white-space: nowrap; }
.pmore { margin: 0 2px 0 auto; font-size: 7px; color: #333; }
.psearch { height: 10px; display: flex; align-items: center; justify-content: space-between; padding: 0 4px 0 2px; color: #999; background: #fff; border-bottom: 1px solid #e4e4e4; flex: none; }
.plist { flex: 1; padding-top: 3px; border-bottom: 1px solid #ccc; }
.pnode { height: 13px; display: flex; align-items: center; padding-left: 6px; }
.tri { width: 0; height: 0; border: 2px solid transparent; border-bottom-color: #333; border-right-color: #333; margin-right: 3px; }
.pitem { height: 13px; width: max-content; display: flex; align-items: center; margin-left: 22px; padding: 0 1px; font-size: 6.9px; white-space: nowrap; }
.chosen { background: #b9d2f0; }

.props { flex: 1; display: flex; flex-direction: column; background: #fff; margin-top: 1px; min-height: 0; }
.ptable { border-collapse: collapse; table-layout: fixed; width: 154px; flex: none; }
.ptable th, .ptable td { height: 11.6px; padding: 0 0 0 2px; border: 1px solid #e2e3e5; font-weight: 400; text-align: left; white-space: nowrap; overflow: hidden; }
.ptable .n { width: 12px; padding: 0; text-align: center; background: #eceeef; color: #666; font-size: 6.3px; }
.ptable .nm { width: 55px; text-align: center; background: #f1f2f3; }
.ptable .val { width: 62.5px; text-align: center; background: #6fb0ee; color: #fff; }
.ptable .add { width: 24.5px; text-align: center; padding: 0; }
.ptable th.add { background: #f1f2f3; }
.ptable .cur { background: #6fb0ee; color: #fff; }
.blue { color: #3a7ae8; }
.graycell { background: #e6e6e6; color: #999; }
.ptable .focus { outline: 1px solid #555; outline-offset: -1px; }
.ex { display: inline-flex; width: 6px; height: 6px; border: 1px solid #999; margin: 0 3px 0 2px; align-items: center; justify-content: center; font: 5px "Liberation Sans", sans-serif; vertical-align: -1px; }
.ptable .ind { padding-left: 17px; background: linear-gradient(#ccc, #ccc) no-repeat 5px 50% / 11px 1px; }
.ptable .cb { vertical-align: middle; }
.pfill { flex: 1; background: linear-gradient(#eceeef, #eceeef) no-repeat 0 0 / 12px 100%; }

.split { width: 3px; flex: none; background: #d4d7da; padding-top: 204px; }
.split i { display: block; width: 3px; height: 53px; background: #3b3f45; }

.canvas { flex: 1; position: relative; background: #000; overflow: hidden; }
.cad { display: block; fill: none; }
.gr path { stroke: #008a00; stroke-width: 1; fill: none; }
.gy path { stroke: #8e8e8e; stroke-width: 1; fill: none; }
.gdot path { stroke: #888; fill: none; }
.ci circle, .ci path { stroke: #b2b2b2; stroke-width: .9; fill: none; }
.cy path { stroke: #06a0a4; fill: none; }
.cyd { stroke: #045f62; fill: none; }
.ye path { stroke: #8c8c00; stroke-width: 1.1; fill: none; }
.pu path { stroke: #960096; fill: none; }
.pud path { stroke: #960096; stroke-dasharray: 16 8; fill: none; }
.re path { stroke: #8f0000; fill: none; }
.selbox2 { stroke: #9a40ff; stroke-width: 1.5; fill: none; }
.selbox { stroke: #fff; stroke-width: 1.5; stroke-dasharray: 1.5 1.5; fill: none; }
.rebar { stroke: #a8a868; stroke-width: 1.2; fill: none; }
.rbt { fill: #b4b45e; font: 300 15px Roboto, "Liberation Sans", sans-serif; }
.tx text { fill: #b8b8b8; font: 100 30px Roboto, "Liberation Sans", sans-serif; text-anchor: middle; }
.tm text { fill: #bcbcbc; font: 100 21px Roboto, "Liberation Sans", sans-serif; text-anchor: middle; }
.cjk { fill: #c4c4c4; font: 200 10px "Noto Sans CJK SC", sans-serif; }
.ux { fill: #f00; font: 10px "Liberation Sans", sans-serif; }
.uy { fill: #0f0; font: 9px "Liberation Sans", sans-serif; }
.sidetools { position: absolute; right: 0; top: 0; width: 18px; height: 124px; background: #b9bdc2; display: flex; flex-direction: column; align-items: center; gap: 3px; padding-top: 4.5px; }
.st { width: 13px; height: 13px; flex: none; }
.st-b { margin-top: 5px; }
.st-c { margin-top: 9px; }

/* status bar */
.status { height: 15px; flex: none; display: flex; align-items: center; background: #e0e0e2; border-top: 1px solid #b8b8b8; color: #555; white-space: nowrap; position: relative; }
.coords { margin-left: 1px; width: 146px; }
.s-h { width: 44px; }
.s-b { width: 76px; }
.s-z { width: 55px; }
.s-y { width: 58px; }
.sb { height: 13px; background: #d4d5d8; border: 1px solid #bbb; display: flex; align-items: center; justify-content: center; margin-right: 2px; flex: none; }
.sb svg { width: 9px; height: 9px; }
.sb .dd { margin-left: 2px; }
.b-l { width: 13px; }
.b-r { width: 20px; background: #fff; border-color: #6ab0ee; }
.b-x { width: 13px; }
.b-a, .b-o { width: 20px; }
.b-t { width: 40px; }
.b-t2 { width: 33px; }
.s-msg { margin-left: 2px; }
.s-fps { margin-left: auto; margin-right: 20px; }
```
